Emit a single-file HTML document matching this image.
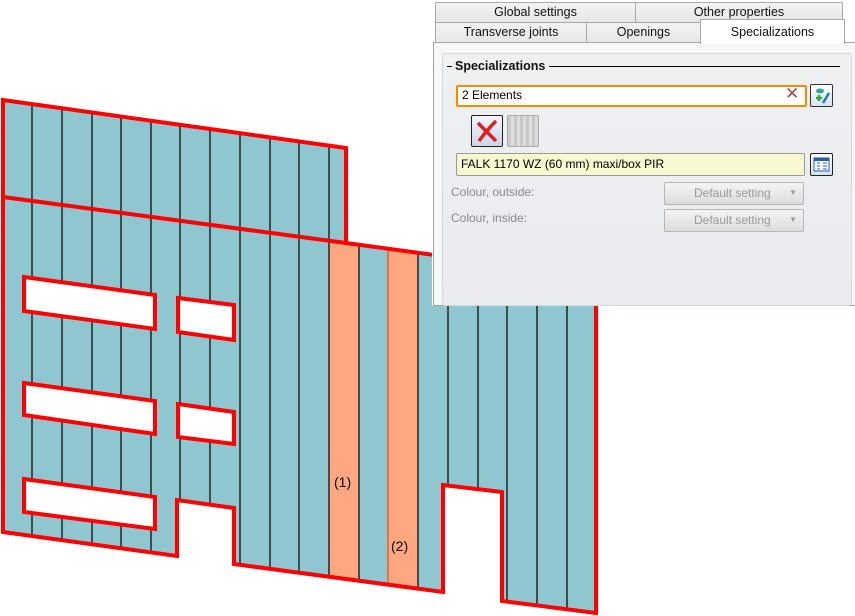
<!DOCTYPE html><html><head><style>
body{margin:0;width:855px;height:616px;background:#fff;position:relative;overflow:hidden;font-family:"Liberation Sans",sans-serif;}
.a{position:absolute;box-sizing:border-box}
.tab{background:linear-gradient(#f3f3f3,#e6e6e6);border:1px solid #a9a9a9;font-size:12.5px;text-align:center;line-height:18px;color:#111}
.lbl{font-size:12px;color:#8a8a8a}
.dd{border:1px solid #b5b5b5;background:linear-gradient(#f4f4f4,#dcdcdc);font-size:12px;color:#9a9a9a;line-height:20px;border-radius:2px}
</style></head><body>
<svg class="a" style="left:0;top:0" width="855" height="616">
<defs><clipPath id="c"><polygon points="3,100 346,148 346,243 596,277 596,613 502,601 502,492 443,485 443,592 234,564 234,508 177,500 177,556 3,532"/></clipPath>
<clipPath id="lo"><polygon points="3,197 346,243 596,277 596,616 0,616"/></clipPath></defs>
<polygon points="3,100 346,148 346,243 596,277 596,613 502,601 502,492 443,485 443,592 234,564 234,508 177,500 177,556 3,532" fill="#8fc6cf"/>
<g clip-path="url(#c)">
<g clip-path="url(#lo)">
<rect x="329" y="0" width="30" height="616" fill="#ffa780"/>
<rect x="388" y="0" width="30" height="616" fill="#ffa780"/>
</g>
<g stroke="#000" stroke-width="1.2">
<line x1="32" y1="0" x2="32" y2="616"/><line x1="62" y1="0" x2="62" y2="616"/><line x1="92" y1="0" x2="92" y2="616"/><line x1="121" y1="0" x2="121" y2="616"/><line x1="151" y1="0" x2="151" y2="616"/><line x1="180" y1="0" x2="180" y2="616"/><line x1="210" y1="0" x2="210" y2="616"/><line x1="240" y1="0" x2="240" y2="616"/><line x1="270" y1="0" x2="270" y2="616"/><line x1="299" y1="0" x2="299" y2="616"/><line x1="329" y1="0" x2="329" y2="616"/><line x1="359" y1="0" x2="359" y2="616"/><line x1="418" y1="0" x2="418" y2="616"/><line x1="448" y1="0" x2="448" y2="616"/><line x1="478" y1="0" x2="478" y2="616"/><line x1="507" y1="0" x2="507" y2="616"/><line x1="537" y1="0" x2="537" y2="616"/><line x1="567" y1="0" x2="567" y2="616"/>
</g>
<line x1="388" y1="0" x2="388" y2="616" stroke="#f05000" stroke-width="1.2"/>
</g>
<g fill="#fff" stroke="#f00" stroke-width="4">
<polygon points="24,277 155,295 155,329 24,311"/>
<polygon points="178,298 234,305 234,340 178,332"/>
<polygon points="24,383 155,401 155,434 24,415"/>
<polygon points="178,404 234,412 234,444 178,437"/>
<polygon points="24,479 155,497 155,529 24,512"/>
</g>
<polygon points="3,100 346,148 346,243 596,277 596,613 502,601 502,492 443,485 443,592 234,564 234,508 177,500 177,556 3,532" fill="none" stroke="#f00" stroke-width="4"/>
<line x1="3" y1="197" x2="346" y2="243" stroke="#f00" stroke-width="4"/>
<text x="334" y="487" font-size="14" font-family="Liberation Sans">(1)</text>
<text x="391" y="551" font-size="14" font-family="Liberation Sans">(2)</text>
</svg>
<div class="a" style="left:432px;top:0;width:423px;height:306px;background:#fff"></div>
<div class="a" style="left:433px;top:42px;width:422px;height:264px;background:#f7f7f7;border:1px solid #a0a0a0;border-right:none"></div>
<div class="a tab" style="left:435px;top:2px;width:201px;height:21px">Global settings</div>
<div class="a tab" style="left:635px;top:2px;width:208px;height:21px">Other properties</div>
<div class="a tab" style="left:435px;top:22px;width:152px;height:21px">Transverse joints</div>
<div class="a tab" style="left:586px;top:22px;width:115px;height:21px">Openings</div>
<div class="a tab" style="left:700px;top:19px;width:145px;height:25px;background:#fff;border-bottom:none;line-height:24px">Specializations</div>
<div class="a" style="left:442px;top:53px;width:410px;height:253px;background:linear-gradient(#eff0f2,#e9ebee);border:1px solid #d5d8dc;border-radius:3px"></div>
<div class="a" style="left:447px;top:66px;width:5px;height:1px;background:#000"></div>
<div class="a" style="left:549px;top:66px;width:291px;height:1px;background:#000"></div>
<div class="a" style="left:455px;top:59px;font-size:12.5px;font-weight:bold;color:#111">Specializations</div>
<div class="a" style="left:456px;top:85px;width:351px;height:22px;border:2px solid #f28c00;background:#fff;border-radius:2px;font-size:12px;line-height:17px;padding-left:4px">2 Elements</div>
<div class="a" style="left:785px;top:84px;font-size:17px;color:#a05050">✕</div>
<div class="a" style="left:810px;top:84px;width:23px;height:23px;border:1px solid #333;border-radius:2px;background:linear-gradient(#fff,#d8e4f0)"><svg width="21" height="21"><ellipse cx="9" cy="6" rx="4" ry="2.5" fill="#3a9"/><path d="M5 13h6M8 10v6" stroke="#3a3" stroke-width="2.5"/><path d="M12 18L18 8" stroke="#27d" stroke-width="2.5"/></svg></div>
<div class="a" style="left:471px;top:115px;width:32px;height:32px;border:1px solid #222;border-radius:2px;background:linear-gradient(#f4f6fa,#c9d6e8)"><svg width="30" height="30"><path d="M6 7Q14 15 24 25M24 5Q15 14 7 25" stroke="#e02020" stroke-width="3.5" fill="none"/></svg></div>
<div class="a" style="left:507px;top:115px;width:32px;height:32px;border:1px solid #aaa;border-radius:2px;background:repeating-linear-gradient(90deg,#c8c8c8 0 3px,#dedede 3px 6px)"></div>
<div class="a" style="left:456px;top:153px;width:349px;height:23px;border:1px solid #9a9a9a;background:#f7f7d0;border-radius:2px;font-size:12px;line-height:21px;padding-left:4px">FALK 1170 WZ (60 mm) maxi/box PIR</div>
<div class="a" style="left:810px;top:153px;width:23px;height:23px;border:1px solid #222;border-radius:2px;background:linear-gradient(#fff,#d8e4f0)"><svg width="21" height="21"><rect x="3" y="4" width="15" height="13" fill="#fff" stroke="#2a5cb0"/><rect x="3" y="4" width="15" height="3" fill="#2a5cb0"/><path d="M6 9h3M6 12h3M6 15h3M12 9h4M12 12h4M12 15h4" stroke="#2a5cb0"/></svg></div>
<div class="a lbl" style="left:451px;top:185px">Colour, outside:</div>
<div class="a lbl" style="left:451px;top:211px">Colour, inside:</div>
<div class="a dd" style="left:664px;top:182px;width:140px;height:23px;padding-left:29px">Default setting<span style="position:absolute;right:6px;font-size:8px">▼</span></div>
<div class="a dd" style="left:664px;top:209px;width:140px;height:23px;padding-left:29px">Default setting<span style="position:absolute;right:6px;font-size:8px">▼</span></div>
</body></html>
